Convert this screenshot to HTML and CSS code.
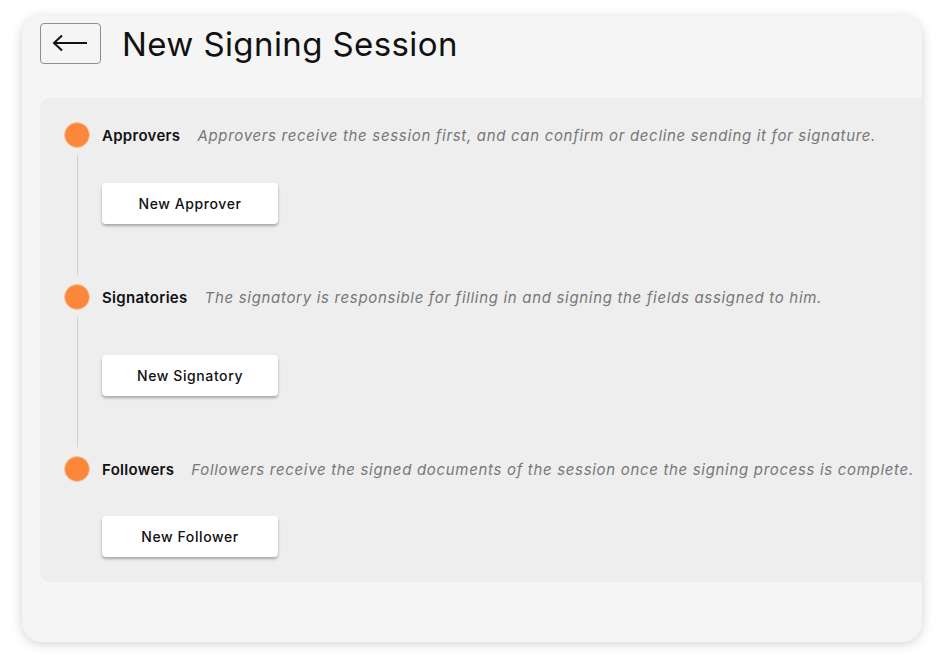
FILE: index.html
```html
<html>
  <head>
    <title>New Signing Session</title>
    <meta name="viewport" content="width=device-width, initial-scale=1.0">
    <link rel="stylesheet" href="styles.css">
  </head>
  <body>
    <div class="card">
      <div class="header">
        <button class="back">
          <svg width="36" height="18" viewBox="0 0 36 18">
            <path d="M35 9 H2 M10 1.5 L2 9 L10 16.5" fill="none" stroke="#111" stroke-width="2"/>
          </svg>
        </button>
        <h1>New Signing Session</h1>
      </div>

      <div class="panel">
        <div class="step">
          <div class="rail">
            <span class="dot"></span>
            <span class="line"></span>
          </div>
          <div class="content">
            <div class="title">
              <b>Approvers</b>
              <i>Approvers receive the session first, and can confirm or decline sending it for signature.</i>
            </div>
            <button class="add">New Approver</button>
          </div>
        </div>

        <div class="step">
          <div class="rail">
            <span class="dot"></span>
            <span class="line"></span>
          </div>
          <div class="content">
            <div class="title">
              <b>Signatories</b>
              <i>The signatory is responsible for filling in and signing the fields assigned to him.</i>
            </div>
            <button class="add wide-gap">New Signatory</button>
          </div>
        </div>

        <div class="step last">
          <div class="rail">
            <span class="dot"></span>
          </div>
          <div class="content">
            <div class="title">
              <b>Followers</b>
              <i>Followers receive the signed documents of the session once the signing process is complete.</i>
            </div>
            <button class="add">New Follower</button>
          </div>
        </div>
      </div>
    </div>
  </body>
</html>
```

FILE: styles.css
```css
body {
  margin: 0;
  padding: 16px 22px;
  background: #ffffff;
  font-family: Inter, "Noto Sans", sans-serif;
  color: #111111;
}

.card {
  width: 900px;
  height: 626px;
  background: #f5f5f5;
  border-radius: 20px;
  box-shadow: 0 2px 12px rgba(0, 0, 0, 0.18);
  overflow: hidden;
}

.header {
  display: flex;
  align-items: center;
  gap: 21px;
  padding: 7px 18px 0 18px;
}

.back {
  width: 61px;
  height: 41px;
  border: 1px solid #8e8e8e;
  border-radius: 4px;
  background: transparent;
  padding: 0;
  display: flex;
  align-items: center;
  justify-content: center;
  cursor: pointer;
}

.back svg {
  margin: 0 2px 2px 0;
}

h1 {
  margin: 0;
  font-size: 33px;
  font-weight: 400;
  letter-spacing: 0.4px;
  color: #111111;
}

.panel {
  margin: 34px 0 0 18px;
  background: #eeeeee;
  border-radius: 10px 0 0 10px;
  padding: 24px 0 25px 24px;
}

.step {
  display: flex;
  gap: 12px;
  padding-bottom: 60px;
}

.step.last {
  padding-bottom: 0;
}

.rail {
  width: 26px;
  display: flex;
  flex-direction: column;
  align-items: center;
  margin-bottom: -60px;
}

.step.last .rail {
  margin-bottom: 0;
}

.dot {
  width: 24px;
  height: 24px;
  border-radius: 50%;
  background: #fa873a;
  border: 1px solid #f7c7a6;
  flex: none;
}

.line {
  flex: 1;
  width: 1px;
  background: #cfcfcf;
  margin: 7px 0 9px 0;
}

.title {
  height: 26px;
  display: flex;
  align-items: center;
  white-space: nowrap;
}

.title b {
  font-size: 15px;
  font-weight: 600;
  letter-spacing: 0.3px;
  color: #111111;
}

.title i {
  margin-left: 17px;
  font-size: 15px;
  letter-spacing: 0.68px;
  color: #777777;
}

.add {
  display: block;
  width: 176px;
  height: 41px;
  margin-top: 35px;
  background: #ffffff;
  border: none;
  border-radius: 4px;
  box-shadow: 0 2px 3px rgba(0, 0, 0, 0.3);
  font-family: inherit;
  font-size: 14px;
  font-weight: 500;
  letter-spacing: 0.6px;
  color: #111111;
  cursor: pointer;
}

.add.wide-gap {
  margin-top: 45px;
}

.step.last .add {
  margin-top: 34px;
}
```
